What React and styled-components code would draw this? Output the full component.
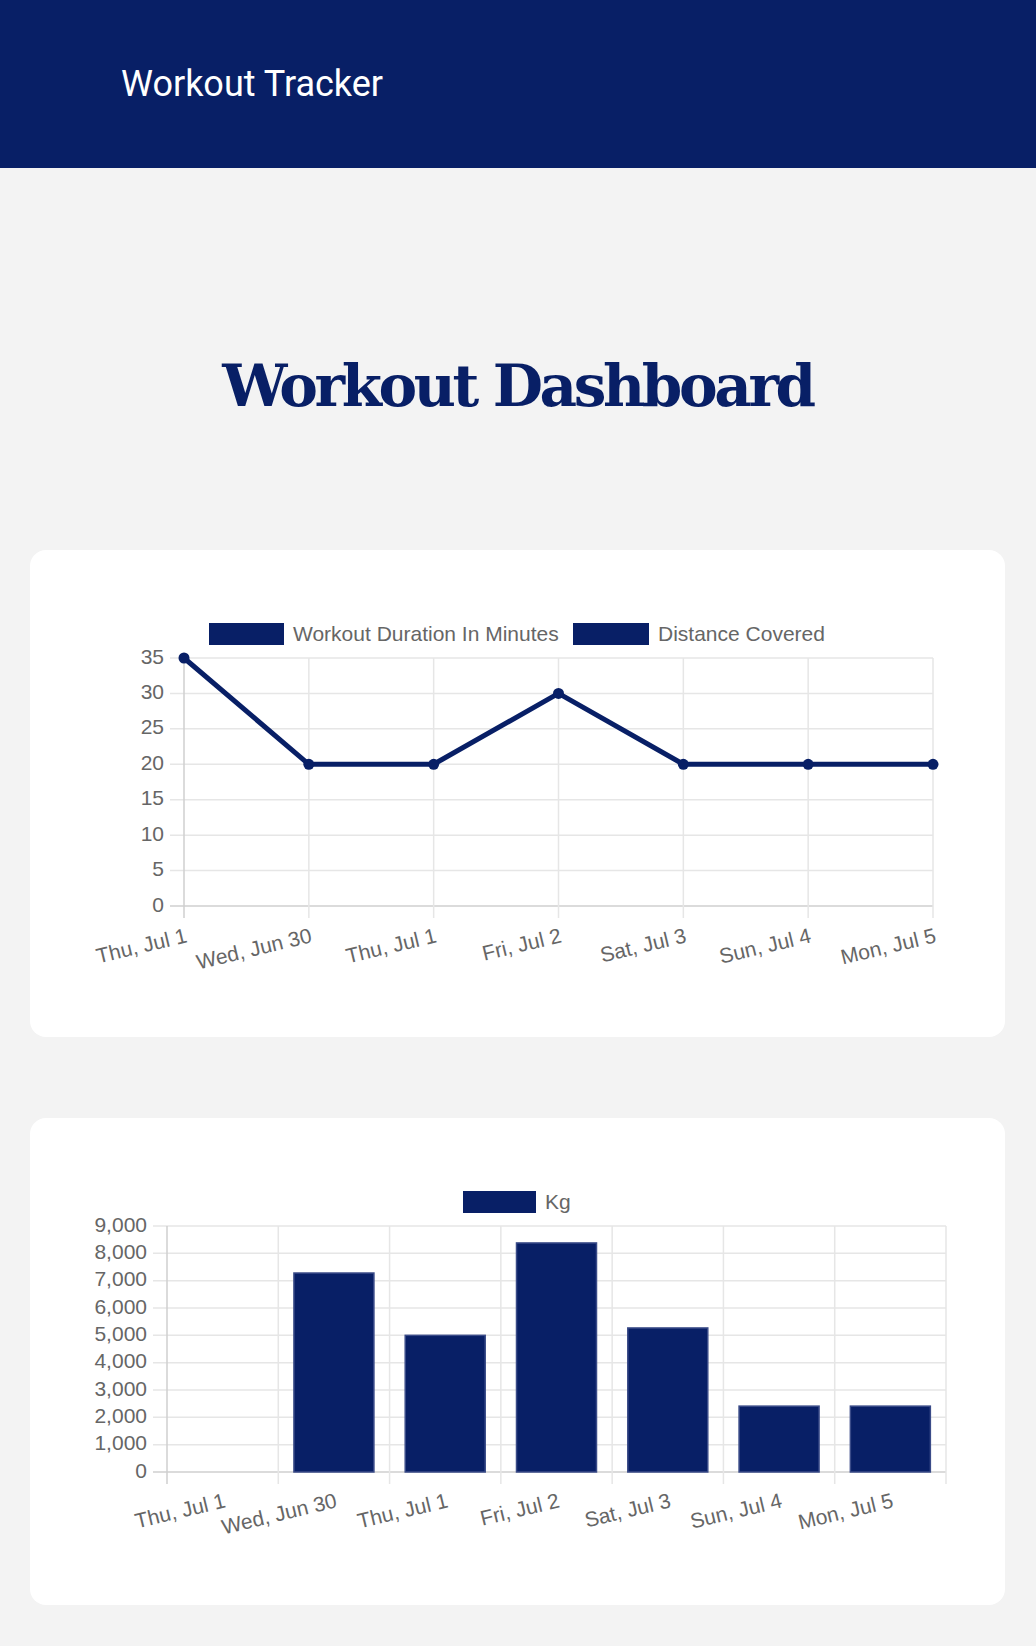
import React from 'react';
import styled, { createGlobalStyle } from 'styled-components';

const NAVY = '#081f66';

const labels = [
	'Thu, Jul 1',
	'Wed, Jun 30',
	'Thu, Jul 1',
	'Fri, Jul 2',
	'Sat, Jul 3',
	'Sun, Jul 4',
	'Mon, Jul 5',
];
const durations = [35, 20, 20, 30, 20, 20, 20];
const weights = [0, 7280, 5000, 8380, 5270, 2410, 2410];

export default function App() {
	return (
		<>
			<GlobalStyle />
			<Header>
				<Brand>Workout Tracker</Brand>
			</Header>
			<Main>
				<Title>Workout Dashboard</Title>
				<Card>
					<DurationChart />
				</Card>
				<Card>
					<WeightChart />
				</Card>
			</Main>
		</>
	);
}

// CHARTS

function Legend({ items }) {
	return (
		<g>
			{items.map(item => (
				<g key={item.label}>
					<LegendBox x={item.x} y={23} width={item.w || 75} height={22} />
					<LegendText x={item.x + (item.w || 75) + 9} y={41}>
						{item.label}
					</LegendText>
				</g>
			))}
		</g>
	);
}

// labels sit under the ticks, tilted like chart.js does when they don't fit
function XLabels({ xs, baseline }) {
	return xs.map((x, i) => (
		<TickText
			key={i}
			x={x + 4}
			y={baseline}
			textAnchor='end'
			transform={`rotate(-13.5 ${x + 4} ${baseline})`}
		>
			{labels[i]}
		</TickText>
	));
}

function DurationChart() {
	const left = 154;
	const right = 903;
	const top = 58;
	const bottom = 306;
	const step = (right - left) / 6;
	const xs = labels.map((_, i) => left + i * step);
	const y = v => bottom - (v * (bottom - top)) / 35;
	const ticks = [0, 5, 10, 15, 20, 25, 30, 35];
	const points = durations.map((v, i) => `${xs[i]},${y(v)}`).join(' ');

	return (
		<Chart viewBox='0 0 975 387'>
			<Legend
				items={[
					{ x: 179, label: 'Workout Duration In Minutes' },
					{ x: 543, w: 76, label: 'Distance Covered' },
				]}
			/>
			{ticks.map(t => (
				<g key={t}>
					<GridLine x1={left - 14} x2={right} y1={y(t)} y2={y(t)} $axis={t === 0} />
					<TickText x={134} y={y(t)} textAnchor='end' dominantBaseline='middle'>
						{t}
					</TickText>
				</g>
			))}
			{xs.map((x, i) => (
				<GridLine key={i} x1={x} x2={x} y1={top} y2={bottom + 12} $axis={i === 0} />
			))}
			<Line points={points} />
			{durations.map((v, i) => (
				<Dot key={i} cx={xs[i]} cy={y(v)} r={5.5} />
			))}
			<XLabels xs={xs} baseline={342} />
		</Chart>
	);
}

function WeightChart() {
	const left = 137;
	const right = 916;
	const top = 58;
	const bottom = 304;
	const cat = (right - left) / 7;
	const y = v => bottom - (v * (bottom - top)) / 9000;
	const ticks = [0, 1000, 2000, 3000, 4000, 5000, 6000, 7000, 8000, 9000];
	const centers = labels.map((_, i) => left + (i + 0.5) * cat);

	return (
		<Chart viewBox='0 0 975 387'>
			<Legend items={[{ x: 433, w: 73, label: 'Kg' }]} />
			{ticks.map(t => (
				<g key={t}>
					<GridLine x1={left - 14} x2={right} y1={y(t)} y2={y(t)} $axis={t === 0} />
					<TickText x={117} y={y(t)} textAnchor='end' dominantBaseline='middle'>
						{t.toLocaleString('en-US')}
					</TickText>
				</g>
			))}
			{labels.concat('').map((_, i) => (
				<GridLine
					key={i}
					x1={left + i * cat}
					x2={left + i * cat}
					y1={top}
					y2={bottom + 12}
					$axis={i === 0}
				/>
			))}
			{weights.map((v, i) =>
				v ? (
					<Bar
						key={i}
						x={centers[i] - 40}
						y={y(v)}
						width={80}
						height={bottom - y(v)}
					/>
				) : null,
			)}
			<XLabels xs={centers} baseline={339} />
		</Chart>
	);
}

// GENERAL STYLES

const GlobalStyle = createGlobalStyle`
	body {
		margin: 0;
		background: #f3f3f3;
		font-family: Roboto, 'Liberation Sans', sans-serif;
	}
`;

const Header = styled.header`
	height: 168px;
	background: ${NAVY};
	display: flex;
	align-items: center;
	padding: 0 121px;
	box-sizing: border-box;
`;

const Brand = styled.h1`
	margin: 0;
	color: #fff;
	font: 400 36px/1 Roboto, sans-serif;
`;

const Main = styled.main`
	display: flex;
	flex-direction: column;
	gap: 81px;
	padding: 0 31px 41px 30px;
`;

const Title = styled.h2`
	margin: 184px 0 47px;
	text-align: center;
	color: ${NAVY};
	font: 700 58px/1.2 'DejaVu Serif', serif;
	letter-spacing: -3.4px;
`;

const Card = styled.section`
	background: #fff;
	border-radius: 16px;
	padding: 50px 0;
`;

// CHART STYLES

const Chart = styled.svg`
	display: block;
	width: 975px;
	height: 387px;
`;

const GridLine = styled.line`
	stroke: ${props => (props.$axis ? '#cfcfcf' : '#e6e6e6')};
	stroke-width: 1.5;
`;

const TickText = styled.text`
	font: 21px 'Liberation Sans', Arial, sans-serif;
	fill: #666;
`;

const LegendBox = styled.rect`
	fill: ${NAVY};
`;

const LegendText = styled(TickText)``;

const Line = styled.polyline`
	fill: none;
	stroke: ${NAVY};
	stroke-width: 5;
	stroke-linejoin: round;
`;

const Dot = styled.circle`
	fill: ${NAVY};
`;

const Bar = styled.rect`
	fill: ${NAVY};
	stroke: #3a4b88;
	stroke-width: 1.5;
`;
